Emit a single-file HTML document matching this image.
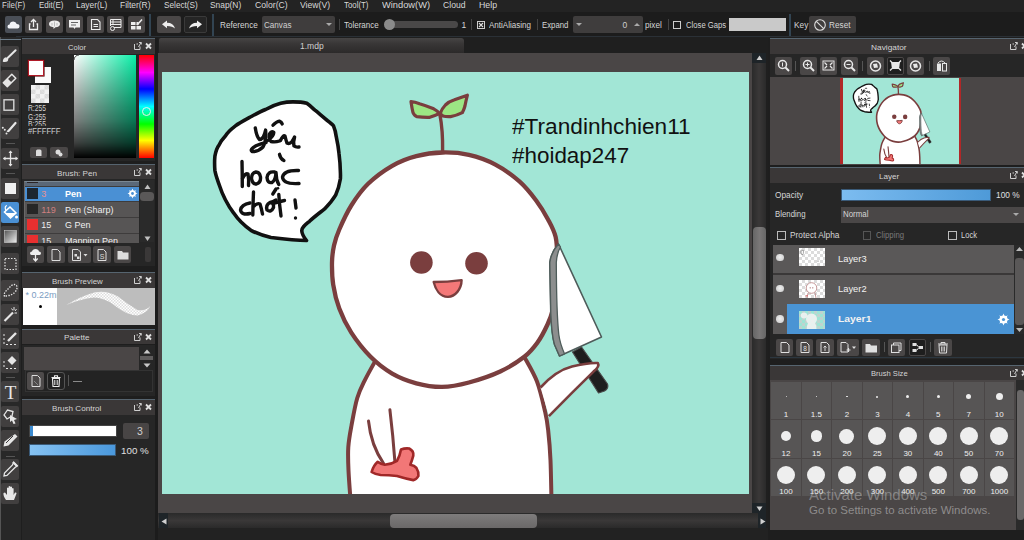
<!DOCTYPE html>
<html><head><meta charset="utf-8"><style>
*{margin:0;padding:0;box-sizing:border-box}
body{width:1024px;height:540px;overflow:hidden;background:#1f1f1f;font-family:"Liberation Sans",sans-serif;position:relative;color:#d6d6d6;font-size:9px}
.a{position:absolute}
.t{position:absolute;white-space:nowrap;line-height:1;transform-origin:0 0}
.btn{position:absolute;background:#4a4747;border-radius:2px}
.sep{position:absolute;width:1px;background:#555}
.tool{position:absolute;left:1px;width:18px;height:21px;background:#3c3a3a;border-radius:2px}
</style></head><body>

<div class="a" style="left:0;top:0;width:1024px;height:12px;background:#232323"></div>
<span class="t" style="left:1.90px;top:1.25px;font-size:9px;color:#d8d8d8;transform:scaleX(0.8885);">File(F)</span>
<span class="t" style="left:38.75px;top:1.25px;font-size:9px;color:#d8d8d8;transform:scaleX(0.8868);">Edit(E)</span>
<span class="t" style="left:76.25px;top:1.25px;font-size:9px;color:#d8d8d8;transform:scaleX(0.9324);">Layer(L)</span>
<span class="t" style="left:120.00px;top:1.25px;font-size:9px;color:#d8d8d8;transform:scaleX(0.9385);">Filter(R)</span>
<span class="t" style="left:163.60px;top:1.25px;font-size:9px;color:#d8d8d8;transform:scaleX(0.9131);">Select(S)</span>
<span class="t" style="left:209.90px;top:1.25px;font-size:9px;color:#d8d8d8;transform:scaleX(0.9309);">Snap(N)</span>
<span class="t" style="left:254.50px;top:1.25px;font-size:9px;color:#d8d8d8;transform:scaleX(0.9628);">Color(C)</span>
<span class="t" style="left:300.40px;top:1.25px;font-size:9px;color:#d8d8d8;transform:scaleX(0.9571);">View(V)</span>
<span class="t" style="left:344.00px;top:1.25px;font-size:9px;color:#d8d8d8;transform:scaleX(0.8745);">Tool(T)</span>
<span class="t" style="left:381.50px;top:1.25px;font-size:9px;color:#d8d8d8;transform:scaleX(1.0323);">Window(W)</span>
<span class="t" style="left:442.75px;top:1.25px;font-size:9px;color:#d8d8d8;transform:scaleX(0.9568);">Cloud</span>
<span class="t" style="left:479.00px;top:1.25px;font-size:9px;color:#d8d8d8;transform:scaleX(0.9722);">Help</span>
<div class="a" style="left:0;top:12px;width:1024px;height:25px;background:#1c1c1c"></div>

<div class="btn" style="left:5px;top:16px;width:17px;height:17px;background:#4a4f57"></div>
<svg class="a" style="left:5px;top:16px" width="17" height="17"><path d="M4 12.5 Q2.5 12.5 2.5 10.5 Q2.5 8.6 4.6 8.6 Q5 5.5 8.3 5.5 Q11 5.5 11.7 8 Q14.5 8 14.5 10.3 Q14.5 12.5 12.5 12.5 Z" fill="#f2f4f8"/></svg>
<div class="btn" style="left:25px;top:16px;width:17px;height:17px"></div>
<svg class="a" style="left:25px;top:16px" width="17" height="17" fill="none" stroke="#eee" stroke-width="1.3"><path d="M5.5 8 H4.5 V13.5 H12.5 V8 H11.5"/><path d="M8.5 11 V3.5 M6 6 L8.5 3.5 L11 6"/></svg>
<div class="btn" style="left:45.5px;top:16px;width:17px;height:17px"></div>
<svg class="a" style="left:45.5px;top:16px" width="17" height="17"><path d="M3 8 Q3 4.5 8.5 4.5 Q14 4.5 14 8 Q14 11 9.5 11.3 L7.5 13 L7.5 11.2 Q3 10.8 3 8Z" fill="#eee"/><path d="M8.5 5.5 V10.5 M6 7 V9.5 M11 7 V9.5" stroke="#999" stroke-width="0.6"/></svg>
<div class="btn" style="left:66px;top:16px;width:17px;height:17px"></div>
<svg class="a" style="left:66px;top:16px" width="17" height="17"><path d="M3 4 H14 V11.5 H9.5 L8.5 13 L7.5 11.5 H3Z" fill="#f0f0f0"/><path d="M5 6.5 H12 M5 9 H10" stroke="#666" stroke-width="1"/></svg>
<div class="btn" style="left:87px;top:16px;width:17px;height:17px"></div>
<svg class="a" style="left:87px;top:16px" width="17" height="17" fill="none" stroke="#eee" stroke-width="1.1"><path d="M4.5 3.5 H10.5 L13 6 V13.5 H4.5Z"/><path d="M6.5 8.5 H11 M6.5 10.5 H11"/></svg>
<div class="btn" style="left:107px;top:16px;width:17px;height:17px"></div>
<svg class="a" style="left:107px;top:16px" width="17" height="17" fill="none" stroke="#eee" stroke-width="1"><path d="M3.5 3.5 H14 V11.5 H7 M3.5 3.5 V10 M3.5 6 H14 M6 3.5 V9 M3.5 8.5 H14"/><circle cx="5.5" cy="12.5" r="2"/></svg>
<div class="btn" style="left:127.5px;top:16px;width:17px;height:17px"></div>
<svg class="a" style="left:127.5px;top:16px" width="17" height="17"><path d="M3 6 H7.5 V9 H3Z M8.5 6 H10.5 V9 H8.5Z M3 10 H7.5 V13.5 H3Z M8.5 10 H13 V13.5 H8.5Z" fill="#eee"/><path d="M9 9 L14 3.5" stroke="#eee" stroke-width="1.5"/></svg>
<div class="a" style="left:149px;top:14px;width:2px;height:22px;background:#324452"></div>
<div class="btn" style="left:157px;top:16px;width:24px;height:17px"></div>
<svg class="a" style="left:157px;top:16px" width="24" height="17"><path d="M5 8.3 L10 4.5 V6.8 Q16.5 6.8 18 12.5 Q15.5 10 10 10 V12.2Z" fill="#eee"/></svg>
<div class="btn" style="left:184px;top:16px;width:23px;height:17px;background:#252525;border:1px solid #3a3a3a"></div>
<svg class="a" style="left:184px;top:16px" width="23" height="17"><path d="M18 8.3 L13 4.5 V6.8 Q6.5 6.8 5 12.5 Q7.5 10 13 10 V12.2Z" fill="#eee"/></svg>
<div class="a" style="left:211.5px;top:14px;width:2px;height:22px;background:#324452"></div>
<span class="t" style="left:220.00px;top:21.15px;font-size:8.5px;color:#d6d6d6;transform:scaleX(0.9638);">Reference</span>
<div class="btn" style="left:262px;top:16px;width:73px;height:17px;background:#3f3d3d"></div>
<span class="t" style="left:263.50px;top:21.15px;font-size:8.5px;color:#cfcfcf;transform:scaleX(0.9539);">Canvas</span>
<svg class="a" style="left:325px;top:22px" width="8" height="5"><path d="M1 1 H7 L4 4Z" fill="#aaa"/></svg>
<div class="sep" style="left:338.5px;top:19px;height:11px;background:#444"></div>
<span class="t" style="left:344.00px;top:21.15px;font-size:8.5px;color:#d6d6d6;transform:scaleX(0.9428);">Tolerance</span>
<div class="a" style="left:386px;top:21px;width:72px;height:7px;background:#4a4848;border-radius:3.5px"></div>
<div class="a" style="left:384px;top:19px;width:11px;height:11px;background:#8a8a8a;border-radius:50%"></div>
<span class="t" style="left:461.50px;top:21.15px;font-size:8.5px;color:#d6d6d6;">1</span>
<div class="sep" style="left:471px;top:19px;height:11px;background:#444"></div>
<div class="a" style="left:477px;top:20.5px;width:8px;height:8px;border:1px solid #ccc"></div>
<svg class="a" style="left:477px;top:20.5px" width="8" height="8"><path d="M2 2 L6 6 M6 2 L2 6" stroke="#ddd" stroke-width="1.1"/></svg>
<span class="t" style="left:489.00px;top:21.15px;font-size:8.5px;color:#d6d6d6;transform:scaleX(0.9455);">AntiAliasing</span>
<div class="sep" style="left:536.5px;top:19px;height:11px;background:#444"></div>
<span class="t" style="left:541.60px;top:21.15px;font-size:8.5px;color:#d6d6d6;transform:scaleX(0.9153);">Expand</span>
<div class="btn" style="left:572.5px;top:16px;width:70px;height:17px;background:#3f3d3d"></div>
<svg class="a" style="left:575px;top:22px" width="8" height="5"><path d="M1 1 H7 L4 4Z" fill="#aaa"/></svg>
<span class="t" style="left:622.50px;top:21.15px;font-size:8.5px;color:#cfcfcf;">0</span>
<svg class="a" style="left:633px;top:22px" width="8" height="5"><path d="M1 4 H7 L4 1Z" fill="#aaa"/></svg>
<span class="t" style="left:645.00px;top:21.15px;font-size:8.5px;color:#d6d6d6;transform:scaleX(0.9609);">pixel</span>
<div class="sep" style="left:668px;top:19px;height:11px;background:#444"></div>
<div class="a" style="left:673px;top:20.5px;width:8px;height:8px;border:1px solid #ccc"></div>
<span class="t" style="left:685.50px;top:21.15px;font-size:8.5px;color:#d6d6d6;transform:scaleX(0.9050);">Close Gaps</span>
<div class="a" style="left:728.5px;top:18px;width:57px;height:13px;background:#c9c9c9"></div>
<div class="a" style="left:789px;top:14px;width:2px;height:22px;background:#324452"></div>
<span class="t" style="left:793.70px;top:21.15px;font-size:8.5px;color:#d6d6d6;transform:scaleX(0.9757);">Key</span>
<div class="btn" style="left:809px;top:16px;width:47px;height:17px;background:#3f3d3d"></div>
<svg class="a" style="left:813px;top:18px" width="14" height="14" fill="none" stroke="#ddd" stroke-width="1.1"><circle cx="7" cy="7" r="5.3"/><path d="M3.3 3.3 L10.7 10.7"/></svg>
<span class="t" style="left:828.50px;top:21.15px;font-size:8.5px;color:#d6d6d6;transform:scaleX(0.9677);">Reset</span>

<div class="a" style="left:0;top:37px;width:21px;height:503px;background:#282828;border-left:1px solid #555"></div>
<div class="a" style="left:0;top:39px;width:21px;height:1px;background:#6e7e8a"></div>
<div class="a" style="left:16px;top:36px;width:1008px;height:1px;background:#2a3036"></div>
<div class="tool" style="top:46px;background:#413f3f"></div><svg class="a" style="left:1px;top:46px" width="19" height="21"><path d="M6.3 12.3 L14.6 4.2" stroke="#e6e6e6" stroke-width="2" stroke-linecap="round"/><path d="M1.8 15.8 Q1.8 11.8 5 11.3 L7.3 13.5 Q6.8 16.8 1.8 15.8Z" fill="#e6e6e6"/></svg>
<div class="tool" style="top:70px;background:#413f3f"></div><svg class="a" style="left:1px;top:70px" width="19" height="21"><path d="M10.8 4.3 L14.8 8.3 L6.3 16.8 L2.3 12.8Z" fill="none" stroke="#e6e6e6" stroke-width="1.5" stroke-linejoin="round"/><path d="M2.3 12.8 L6.6 8.5 L10.6 12.5 L6.3 16.8Z" fill="#e6e6e6"/></svg>
<div class="tool" style="top:94px;background:#413f3f"></div><svg class="a" style="left:1px;top:94px" width="19" height="21"><rect x="3" y="5.8" width="9.8" height="10.4" fill="none" stroke="#d8d8d8" stroke-width="1.4"/></svg>
<div class="tool" style="top:118px;background:#413f3f"></div><svg class="a" style="left:1px;top:118px" width="19" height="21"><path d="M7.5 13 L14.5 5" stroke="#e6e6e6" stroke-width="2.2" stroke-linecap="round"/><circle cx="1.8" cy="9.8" r="1" fill="#e6e6e6"/><circle cx="3.8" cy="11.8" r="1" fill="#e6e6e6"/><circle cx="5.5" cy="15.5" r="1" fill="#e6e6e6"/><circle cx="6.5" cy="13.3" r="0.8" fill="#e6e6e6"/></svg>
<div class="tool" style="top:148px;background:#413f3f"></div><svg class="a" style="left:1px;top:148px" width="19" height="21"><path d="M9.5 3 V18 M2.5 10.5 H16.5" stroke="#e6e6e6" stroke-width="1.3"/><path d="M9.5 2.5 L7.5 5 H11.5Z M9.5 18.5 L7.5 16 H11.5Z M2 10.5 L4.5 8.5 V12.5Z M17 10.5 L14.5 8.5 V12.5Z" fill="#e6e6e6"/></svg>
<div class="tool" style="top:178px;background:#413f3f"></div><svg class="a" style="left:1px;top:178px" width="19" height="21"><rect x="4" y="5" width="11" height="11" fill="#f0f0f0"/></svg>
<div class="tool" style="top:202px;background:#4a90d4"></div><svg class="a" style="left:1px;top:202px" width="19" height="21"><path d="M3.5 10 L9 5 L15 11 L9.5 16Z" fill="none" stroke="#fff" stroke-width="1.6"/><path d="M4 11 L15 11 L9.5 16Z" fill="#fff"/><path d="M5 9 Q3 4 6 3.5" stroke="#fff" stroke-width="1.2" fill="none"/><circle cx="15.5" cy="15" r="1.5" fill="#fff"/></svg>
<div class="tool" style="top:225.5px;background:#413f3f"></div><svg class="a" style="left:1px;top:225.5px" width="19" height="21"><defs><linearGradient id="gr1" x1="0" y1="0" x2="1" y2="1"><stop offset="0" stop-color="#555"/><stop offset="1" stop-color="#eee"/></linearGradient></defs><rect x="3.5" y="4.5" width="12" height="12" fill="url(#gr1)" stroke="#ccc" stroke-width="0.6"/></svg>
<div class="tool" style="top:253px;background:#413f3f"></div><svg class="a" style="left:1px;top:253px" width="19" height="21"><rect x="4" y="5.5" width="11" height="11" fill="none" stroke="#e6e6e6" stroke-width="1.2" stroke-dasharray="1.5 1.5"/></svg>
<div class="tool" style="top:280px;background:#413f3f"></div><svg class="a" style="left:1px;top:280px" width="19" height="21"><path d="M3.5 16.5 Q2.5 13 5.5 10.5 Q8 8 10.5 5.5 Q13.5 3.5 15.5 5.5 Q17 8 14.5 11.5 Q11.5 15 7.5 15.5 Q5 15.8 3.5 16.5" fill="none" stroke="#e6e6e6" stroke-width="1.3" stroke-dasharray="1.4 1.3"/></svg>
<div class="tool" style="top:304px;background:#413f3f"></div><svg class="a" style="left:1px;top:304px" width="19" height="21"><path d="M3.5 17 L12 8.5" stroke="#e6e6e6" stroke-width="2.2"/><path d="M13 3 V6 M15.5 5 L14 7 M16 9 H13.5 M10.5 4.5 L12 6.5" stroke="#e6e6e6" stroke-width="1"/></svg>
<div class="tool" style="top:328px;background:#413f3f"></div><svg class="a" style="left:1px;top:328px" width="19" height="21"><path d="M7 13 L15 5" stroke="#e6e6e6" stroke-width="2.4"/><path d="M3 6 V8 M3 10 V12 M3 14 V16 M5 16.5 H7 M9 16.5 H11 M13 16.5 H15" stroke="#e6e6e6" stroke-width="1"/></svg>
<div class="tool" style="top:352px;background:#413f3f"></div><svg class="a" style="left:1px;top:352px" width="19" height="21"><path d="M11 4 L15.5 8.5 L11 13 L6.5 8.5Z" fill="#e6e6e6"/><path d="M3 9 V11 M3 13 V15 M5 16.5 H7 M9 16.5 H11 M13 16.5 H15" stroke="#e6e6e6" stroke-width="1"/></svg>
<div class="tool" style="top:381px;background:#413f3f"></div><svg class="a" style="left:1px;top:381px" width="19" height="21"><text x="9.5" y="18" font-family="Liberation Serif" font-size="19" fill="#e6e6e6" text-anchor="middle">T</text></svg>
<div class="tool" style="top:406px;background:#413f3f"></div><svg class="a" style="left:1px;top:406px" width="19" height="21"><path d="M3 9 L6.5 4 L12 5.5 L11 10 L6 13Z" fill="none" stroke="#e6e6e6" stroke-width="1.3"/><path d="M9 9 L16 13 L13 14 L14.5 17.5 L12.5 18 L11 14.5 L9 16Z" fill="#e6e6e6"/></svg>
<div class="tool" style="top:430px;background:#413f3f"></div><svg class="a" style="left:1px;top:430px" width="19" height="21"><path d="M14 4 L16.5 6.5 L7.5 15.5 L2.5 16.5 L3.5 11.5Z" fill="#e6e6e6"/><path d="M5 13 L12 6" stroke="#3c3a3a" stroke-width="1"/></svg>
<div class="tool" style="top:458.5px;background:#413f3f"></div><svg class="a" style="left:1px;top:458.5px" width="19" height="21"><path d="M12.5 3.5 L16 7 L14 8.5 L6 16.5 L3 17 L3.5 14 L11.5 6Z" fill="none" stroke="#e6e6e6" stroke-width="1.3"/><path d="M12 3 L16.5 7.5" stroke="#e6e6e6" stroke-width="2.2"/></svg>
<div class="tool" style="top:483px;background:#413f3f"></div><svg class="a" style="left:1px;top:483px" width="19" height="21"><path d="M5 17 Q2 13 2.5 10 L4 9.5 L6 12 V5 Q6.8 4 7.6 5 V10 V3.5 Q8.5 2.5 9.4 3.5 V10 V4 Q10.2 3 11 4 V10.5 V5.5 Q11.8 4.5 12.6 5.5 V12 L14 9.5 Q15.5 9 15.5 10.5 L13 17Z" fill="#e6e6e6"/></svg>
<div class="a" style="left:6px;top:143px;width:9px;height:1px;background:#555"></div>
<div class="a" style="left:6px;top:173px;width:9px;height:1px;background:#555"></div>
<div class="a" style="left:6px;top:377px;width:9px;height:1px;background:#555"></div>
<div class="a" style="left:6px;top:455.5px;width:9px;height:1px;background:#555"></div>
<div class="a" style="left:21px;top:37px;width:137px;height:503px;background:#1e1e1e"></div>
<div class="a" style="left:22px;top:38px;width:135px;height:15.6px;background:#3a3737"></div><div class="a" style="left:22px;top:38px;width:135px;height:1px;background:#56646f"></div><span class="t" style="left:68.00px;top:43.50px;font-size:8px;color:#d4d4d4;transform:scaleX(0.9412);">Color</span><svg class="a" style="left:133px;top:41px" width="22" height="10"><path d="M1.5 3 V8.5 H7 V5.5 M3.5 3 H5 M5.5 6 L8 1.5 M6 1.5 H8.3 V3.5" fill="none" stroke="#cfcfcf" stroke-width="1"/><path d="M13 2.5 L18 7.5 M18 2.5 L13 7.5" stroke="#e0e0e0" stroke-width="1.8"/></svg><div class="a" style="left:22px;top:54px;width:135px;height:107px;background:#262626"></div><div class="a" style="left:35px;top:67px;width:16px;height:16px;background:#fafafa"></div><div class="a" style="left:28.4px;top:60px;width:15.6px;height:15.6px;background:#fff;border:1.8px solid #b01a28;box-shadow:0 0 0 0.6px #5a1010"></div><div class="a" style="left:31px;top:85px;width:18px;height:18px;background:#f2f2f2;background-image:linear-gradient(45deg,#dcdcdc 25%,transparent 25%,transparent 75%,#dcdcdc 75%),linear-gradient(45deg,#dcdcdc 25%,transparent 25%,transparent 75%,#dcdcdc 75%);background-size:9px 9px;background-position:0 0,4.5px 4.5px"></div><span class="t" style="left:28.40px;top:105.20px;font-size:8.2px;color:#d0d0d0;transform:scaleX(0.8234);">R:255</span><span class="t" style="left:28.40px;top:113.60px;font-size:8.2px;color:#d0d0d0;transform:scaleX(0.8067);">G:255</span><div class="a" style="left:0;top:121px;width:80px;height:5px;overflow:hidden"><span class="t" style="left:28.40px;top:-0.00px;font-size:8.2px;color:#d0d0d0;transform:scaleX(0.8409);">B:255</span></div><span class="t" style="left:28.40px;top:128.00px;font-size:8.2px;color:#d0d0d0;transform:scaleX(0.9403);">#FFFFFF</span><div class="btn" style="left:30px;top:146.5px;width:16.5px;height:11px"></div><svg class="a" style="left:30px;top:146.5px" width="17" height="11"><path d="M6 9 V4 Q6 2.5 7.5 2.5 H10 Q11.5 2.5 11.5 4 V9Z" fill="#ddd"/></svg><div class="btn" style="left:50px;top:146.5px;width:17.5px;height:11px"></div><svg class="a" style="left:50px;top:146.5px" width="18" height="11"><circle cx="8" cy="5" r="2.5" fill="#ddd"/><circle cx="10.5" cy="7.5" r="2" fill="#ddd"/></svg><div class="a" style="left:73.5px;top:55px;width:62.5px;height:103px;background:linear-gradient(to bottom,rgba(0,0,0,0) 0%,rgba(0,0,0,.21) 25%,rgba(0,0,0,.5) 63%,rgba(0,0,0,.75) 85%,#000 100%),linear-gradient(to right,#fff,#0af0a8)"></div><svg class="a" style="left:73px;top:54px" width="8" height="8"><path d="M1 6 A5 5 0 0 1 6 1" fill="none" stroke="#444" stroke-width="1"/></svg><div class="a" style="left:138.5px;top:55px;width:15.5px;height:103px;background:linear-gradient(to bottom,#f00 0%,#f0f 17%,#00f 33%,#0ff 50%,#0f0 67%,#ff0 83%,#f00 100%)"></div><div class="a" style="left:141.5px;top:106.5px;width:9px;height:9px;border:1.5px solid #eee;border-radius:50%"></div><div class="a" style="left:22px;top:164px;width:135px;height:15.6px;background:#3a3737"></div><div class="a" style="left:22px;top:164px;width:135px;height:1px;background:#56646f"></div><span class="t" style="left:57.00px;top:169.50px;font-size:8px;color:#d4d4d4;transform:scaleX(1.0107);">Brush: Pen</span><svg class="a" style="left:133px;top:167px" width="22" height="10"><path d="M1.5 3 V8.5 H7 V5.5 M3.5 3 H5 M5.5 6 L8 1.5 M6 1.5 H8.3 V3.5" fill="none" stroke="#cfcfcf" stroke-width="1"/><path d="M13 2.5 L18 7.5 M18 2.5 L13 7.5" stroke="#e0e0e0" stroke-width="1.8"/></svg><div class="a" style="left:22px;top:179px;width:135px;height:87px;background:#262626"></div><div class="a" style="left:24px;top:181px;width:114.5px;height:61.5px;background:#4a4747;overflow:hidden;border-left:1px solid #6a6868;border-top:1px solid #7a8894"><div class="a" style="left:0;top:-11.7px;width:114.5px;height:15.7px;background:#5a6878"></div><div class="a" style="left:2.2px;top:-9.899999999999999px;width:10.5px;height:10.9px;background:#2a2426"></div><span class="t" style="left:16.30px;top:-7.70px;font-size:9px;color:#eeeeee;"></span><span class="t" style="left:40.00px;top:-7.70px;font-size:9px;color:#f0f0f0;"></span><div class="a" style="left:0;top:4px;width:114.5px;height:15.7px;background:#4a90d4"></div><div class="a" style="left:2.2px;top:5.8px;width:10.5px;height:10.9px;background:#1c2630"></div><span class="t" style="left:16.30px;top:8.00px;font-size:9px;color:#e89090;">3</span><span class="t" style="left:40.00px;top:8.00px;font-size:9px;color:#ffffff;font-weight:bold;">Pen</span><svg class="a" style="left:102px;top:6.3px" width="11" height="11"><g fill="#fff"><circle cx="5.5" cy="5.5" r="3.3"/><path d="M5.5 0.5 L6.5 3 L4.5 3Z M5.5 10.5 L6.5 8 L4.5 8Z M0.5 5.5 L3 4.5 L3 6.5Z M10.5 5.5 L8 4.5 L8 6.5Z M2 2 L4.2 3.2 L3.2 4.2Z M9 9 L6.8 7.8 L7.8 6.8Z M9 2 L7.8 4.2 L6.8 3.2Z M2 9 L3.2 6.8 L4.2 7.8Z"/></g><circle cx="5.5" cy="5.5" r="1.4" fill="#4a90d4"/></svg><div class="a" style="left:0;top:19.7px;width:114.5px;height:15.7px;background:#575555"></div><div class="a" style="left:2.2px;top:21.5px;width:10.5px;height:10.9px;background:#262626"></div><span class="t" style="left:16.30px;top:23.70px;font-size:9px;color:#d08080;">119</span><span class="t" style="left:40.00px;top:23.70px;font-size:9px;color:#f0f0f0;">Pen (Sharp)</span><div class="a" style="left:0;top:35.3px;width:114.5px;height:15.7px;background:#575555"></div><div class="a" style="left:2.2px;top:37.099999999999994px;width:10.5px;height:10.9px;background:#e83030"></div><span class="t" style="left:16.30px;top:39.30px;font-size:9px;color:#eeeeee;">15</span><span class="t" style="left:40.00px;top:39.30px;font-size:9px;color:#f0f0f0;">G Pen</span><div class="a" style="left:0;top:51px;width:114.5px;height:15.7px;background:#575555"></div><div class="a" style="left:2.2px;top:52.8px;width:10.5px;height:10.9px;background:#e83030"></div><span class="t" style="left:16.30px;top:55.00px;font-size:9px;color:#eeeeee;">15</span><span class="t" style="left:40.00px;top:55.00px;font-size:9px;color:#f0f0f0;">Mapping Pen</span><div class="a" style="left:0;top:3.5px;width:114.5px;height:1px;background:#3e3c3c"></div><div class="a" style="left:0;top:19.2px;width:114.5px;height:1px;background:#3e3c3c"></div><div class="a" style="left:0;top:34.8px;width:114.5px;height:1px;background:#3e3c3c"></div><div class="a" style="left:0;top:50.5px;width:114.5px;height:1px;background:#3e3c3c"></div></div><div class="a" style="left:140px;top:180px;width:13.5px;height:62px;background:#2a2a2a"></div><svg class="a" style="left:143.5px;top:184px" width="7" height="6"><path d="M0.5 5 H6.5 L3.5 0.5Z" fill="#c0c0c0"/></svg><div class="a" style="left:140px;top:192px;width:13.5px;height:8.5px;background:#5a5858;border-radius:3.5px"></div><svg class="a" style="left:143.5px;top:236px" width="7" height="6"><path d="M0.5 0.5 H6.5 L3.5 5Z" fill="#c0c0c0"/></svg><div class="btn" style="left:27px;top:245.5px;width:17px;height:17.5px"></div><div class="btn" style="left:47px;top:245.5px;width:18px;height:17.5px"></div><div class="btn" style="left:68px;top:245.5px;width:22.5px;height:17.5px"></div><div class="btn" style="left:93px;top:245.5px;width:18px;height:17.5px"></div><div class="btn" style="left:113.5px;top:245.5px;width:17.5px;height:17.5px"></div><svg class="a" style="left:27px;top:245.5px" width="17" height="18"><path d="M4.5 9 Q3 9 3 7.3 Q3 5.5 5 5.5 Q5.5 3 8.5 3 Q11.5 3 12 5.5 Q14 5.5 14 7.3 Q14 9 12.5 9Z" fill="#eee"/><path d="M8.5 8 V15 M6.3 12.5 L8.5 15 L10.7 12.5" stroke="#eee" stroke-width="1.3" fill="none"/></svg><svg class="a" style="left:47px;top:245.5px" width="18" height="18" fill="none" stroke="#ddd" stroke-width="1"><path d="M5 3.5 H10.5 L13 6 V14.5 H5Z"/></svg><svg class="a" style="left:68px;top:245.5px" width="23" height="18"><path d="M4.5 3.5 H10 L12.5 6 V14.5 H4.5Z" fill="none" stroke="#ddd" stroke-width="1"/><rect x="6.5" y="8" width="2.5" height="2.5" fill="#ddd"/><rect x="9" y="10.5" width="2.5" height="2.5" fill="#ddd"/><path d="M15.5 8 H19.5 L17.5 10.5Z" fill="#ddd"/></svg><svg class="a" style="left:93px;top:245.5px" width="18" height="18"><path d="M5 3.5 H10.5 L13 6 V14.5 H5Z" fill="none" stroke="#ddd" stroke-width="1"/><text x="9" y="12.5" font-size="7" fill="#ddd" text-anchor="middle" font-family="Liberation Sans">S</text></svg><svg class="a" style="left:113.5px;top:245.5px" width="18" height="18"><path d="M3.5 5 H8 L9 6.5 H14.5 V13.5 H3.5Z" fill="#ddd"/></svg><div class="a" style="left:145px;top:247px;width:6px;height:15px;background:#3a3838;border-radius:2px"></div><div class="a" style="left:22px;top:272px;width:135px;height:15.6px;background:#3a3737"></div><div class="a" style="left:22px;top:272px;width:135px;height:1px;background:#56646f"></div><span class="t" style="left:51.62px;top:277.50px;font-size:8px;color:#d4d4d4;transform:scaleX(0.9839);">Brush Preview</span><svg class="a" style="left:133px;top:275px" width="22" height="10"><path d="M1.5 3 V8.5 H7 V5.5 M3.5 3 H5 M5.5 6 L8 1.5 M6 1.5 H8.3 V3.5" fill="none" stroke="#cfcfcf" stroke-width="1"/><path d="M13 2.5 L18 7.5 M18 2.5 L13 7.5" stroke="#e0e0e0" stroke-width="1.8"/></svg><div class="a" style="left:22.5px;top:288px;width:132.5px;height:37px;background:#bdbdbd"></div><div class="a" style="left:22.5px;top:288px;width:34.5px;height:37px;background:#fff"></div><div class="a" style="left:22.5px;top:288px;width:34.5px;height:14px;overflow:hidden"><span class="t" style="left:3.00px;top:3.00px;font-size:9px;color:#7a9cc2;">* 0.22mm</span></div><div class="a" style="left:38.5px;top:304.5px;width:3px;height:3px;background:#000;border-radius:50%"></div><svg class="a" style="left:57px;top:288px" width="98" height="37"><defs><pattern id="chk" width="3" height="3" patternUnits="userSpaceOnUse"><rect width="3" height="3" fill="#fff"/><rect width="1.5" height="1.5" fill="#dedede"/><rect x="1.5" y="1.5" width="1.5" height="1.5" fill="#dedede"/></pattern></defs><path d="M9.25 17 Q23 8.5 38 4.2 Q50 2 61 8.5 Q71 16.5 80.5 22 Q88 23.5 93.5 18 Q89 26 80.5 27.5 Q69 27 57 17 Q47 9.5 37 9.5 Q23 11 9.25 17Z" fill="url(#chk)"/></svg><div class="a" style="left:22px;top:328.5px;width:135px;height:15.6px;background:#3a3737"></div><div class="a" style="left:22px;top:328.5px;width:135px;height:1px;background:#56646f"></div><span class="t" style="left:64.25px;top:334.00px;font-size:8px;color:#d4d4d4;transform:scaleX(1.0238);">Palette</span><svg class="a" style="left:133px;top:331.5px" width="22" height="10"><path d="M1.5 3 V8.5 H7 V5.5 M3.5 3 H5 M5.5 6 L8 1.5 M6 1.5 H8.3 V3.5" fill="none" stroke="#cfcfcf" stroke-width="1"/><path d="M13 2.5 L18 7.5 M18 2.5 L13 7.5" stroke="#e0e0e0" stroke-width="1.8"/></svg><div class="a" style="left:22px;top:344.5px;width:135px;height:51px;background:#262626"></div><div class="a" style="left:24px;top:346.5px;width:114.7px;height:23px;background:#4a4646"></div><svg class="a" style="left:143px;top:348.5px" width="8" height="5"><path d="M0.5 4.5 H7.5 L4 0.5Z" fill="#c8c8c8"/></svg><div class="a" style="left:139.7px;top:356px;width:13.7px;height:3.8px;background:#5e5c5c"></div><svg class="a" style="left:143px;top:362.5px" width="8" height="5"><path d="M0.5 0.5 H7.5 L4 4.5Z" fill="#c8c8c8"/></svg><div class="a" style="left:24.8px;top:369.8px;width:128.6px;height:22.2px;background:#232323;border:1px solid #333"></div><div class="btn" style="left:26.8px;top:372px;width:17px;height:18px;background:#4e4b4b"></div><svg class="a" style="left:26.8px;top:372px" width="17" height="18" fill="none" stroke="#ddd" stroke-width="1"><path d="M5 3.5 H10.5 L13 6 V14.5 H5Z"/><path d="M7 9 L11 13" stroke="#888"/></svg><div class="btn" style="left:47.4px;top:372px;width:17.5px;height:18px;background:#222;border:1px solid #555;border-radius:3px"></div><svg class="a" style="left:47.4px;top:372px" width="18" height="18"><path d="M4.5 5.5 H13.5 M7.5 5 V3.8 H10.5 V5" stroke="#eee" stroke-width="1.1" fill="none"/><path d="M5.5 6.5 H12.5 L12 14.5 H6Z" fill="none" stroke="#eee" stroke-width="1.1"/><path d="M7.8 8 V13 M10.2 8 V13" stroke="#eee" stroke-width="1"/></svg><div class="a" style="left:68px;top:375px;width:1px;height:11px;background:#555"></div><div class="a" style="left:72.7px;top:381px;width:9.5px;height:1.2px;background:#8a8a8a"></div><div class="a" style="left:22px;top:399px;width:135px;height:15.6px;background:#3a3737"></div><div class="a" style="left:22px;top:399px;width:135px;height:1px;background:#56646f"></div><span class="t" style="left:52.30px;top:404.50px;font-size:8px;color:#d4d4d4;transform:scaleX(1.0098);">Brush Control</span><svg class="a" style="left:133px;top:402px" width="22" height="10"><path d="M1.5 3 V8.5 H7 V5.5 M3.5 3 H5 M5.5 6 L8 1.5 M6 1.5 H8.3 V3.5" fill="none" stroke="#cfcfcf" stroke-width="1"/><path d="M13 2.5 L18 7.5 M18 2.5 L13 7.5" stroke="#e0e0e0" stroke-width="1.8"/></svg><div class="a" style="left:22px;top:415px;width:135px;height:125px;background:#262626"></div><div class="a" style="left:29px;top:424.5px;width:88px;height:12px;background:#fff;border:1px solid #444"></div><div class="a" style="left:30px;top:425.5px;width:3px;height:10px;background:#3a8ad0"></div><div class="btn" style="left:122.5px;top:422.5px;width:26px;height:16px;background:#484545"></div><span class="t" style="left:137.00px;top:425.75px;font-size:10.5px;color:#d0d0d0;">3</span><div class="a" style="left:29px;top:444px;width:87px;height:12px;background:linear-gradient(to right,#86c2f2,#4a98dc);border:1px solid #3a5a78"></div><span class="t" style="left:121.00px;top:445.75px;font-size:9.5px;color:#e0e0e0;transform:scaleX(1.0320);">100 %</span><div class="a" style="left:155px;top:38px;width:3px;height:502px;background:#1c1c1c"></div>
<div class="a" style="left:158px;top:37px;width:610px;height:503px;background:#1f1f1f"></div>
<div class="a" style="left:158.5px;top:37.5px;width:305px;height:15.5px;background:linear-gradient(#474545,#383636 40%,#2c2a2a);border-radius:2px 3px 0 0"></div>
<span class="t" style="left:300.00px;top:41.55px;font-size:8.5px;color:#d0d0d0;">1.mdp</span>
<div class="a" style="left:158px;top:53px;width:594px;height:460px;background:#4a4646"></div>
<div class="a" style="left:752px;top:53px;width:14px;height:460px;background:linear-gradient(to right,#2a2a2a,#3a3838,#2a2a2a)"></div>
<div class="a" style="left:752px;top:53px;width:14px;height:10px;background:#1e2428"></div>
<svg class="a" style="left:756px;top:55px" width="7" height="6"><path d="M0.5 5 H6.5 L3.5 0.5Z" fill="#d0d0d0"/></svg>
<div class="a" style="left:752.5px;top:226.5px;width:13px;height:112px;background:linear-gradient(to right,#666,#7a7878,#666);border-radius:4px"></div>
<div class="a" style="left:752px;top:503px;width:14px;height:10px;background:#1e2428"></div>
<svg class="a" style="left:756px;top:505.5px" width="7" height="6"><path d="M0.5 0.5 H6.5 L3.5 5Z" fill="#d0d0d0"/></svg>
<div class="a" style="left:158px;top:512.5px;width:608px;height:15.5px;background:linear-gradient(#2a2a2a,#3a3838 50%,#2a2a2a)"></div>
<div class="a" style="left:159px;top:513px;width:9px;height:15px;background:#1e2428"></div>
<svg class="a" style="left:160.5px;top:517.5px" width="6" height="7"><path d="M5.5 0.5 V6.5 L0.5 3.5Z" fill="#d0d0d0"/></svg>
<div class="a" style="left:389.5px;top:514px;width:147.5px;height:13.5px;background:linear-gradient(#7e7c7c,#6a6868);border-radius:4px"></div>
<div class="a" style="left:758px;top:513px;width:8px;height:15px;background:#1e2428"></div>
<svg class="a" style="left:760px;top:517.5px" width="6" height="7"><path d="M0.5 0.5 V6.5 L5.5 3.5Z" fill="#d0d0d0"/></svg>
<div class="a" style="left:158px;top:528px;width:610px;height:12px;background:#222"></div>
<svg width="0" height="0" style="position:absolute"><symbol id="art" viewBox="162 71.5 587 422.5" preserveAspectRatio="none">
<rect x="162" y="71.5" width="587" height="422.5" fill="#a2e6d6"/>
<path d="M214.9 155.6 C216 150 217 147 219 144.6 C221 140 223 138 225.8 135 C228 131 232 128 235.4 125.4 C240 122 245 119.5 249.2 117.2 C255 114 260 111 265.6 109 C271 106 276 104 280.7 102.8 C285 101.8 289 101.4 293 101.4 C298 101.4 303 101.8 306.8 102.8 C310 105 312.5 107.5 315 109.7 C319 113 323 116.5 327.3 120 C330 122 332 123.5 333.5 125.4 C335 129 335.8 132.5 336.3 136.4 C337.5 142 338.5 147.5 339 152.9 C339.8 159 340.3 165 340.4 172 C340.5 174 340.5 176 340.4 178.2 C339.5 184 338 189.5 335.6 194.7 C332.5 200 328.5 204.5 324.6 208.4 C319.5 212.5 314 216.5 309.5 220.8 C305 224.5 301.5 227 301.8 230.5 C302 234 304.5 237.5 306.5 240 C295 240 283 238.5 271 237 C262 235 256 232.5 250.9 229.8 C244 225 238 219 233.7 212.6 C228 205 222 193 219 183.7 C217 178 215.5 174 214.9 170 C214.5 165 214.5 160 214.9 155.6Z" fill="#fff" stroke="#111" style="stroke-width:calc(3.6px * var(--k,1))" stroke-linejoin="round"/>
<g fill="none" stroke="#111" style="stroke-width:calc(3.4px * var(--kt,1))" stroke-linecap="round" stroke-linejoin="round">
<path d="M255.3 127.5 Q256.5 136 259.5 139 Q263.5 139 265.6 129.6 Q266.5 140 263 146.5 Q258 151.5 252 151 Q249.5 149 256 145.3 Q261 143 266 142"/>
<path d="M267.5 140 Q273.5 136 273.8 132 Q271 130 269.3 134 Q268.5 139 271 141 Q275 142 279.5 140.5"/>
<path d="M273 124.7 Q276.5 121 279.3 120.6 Q281.5 121.5 282.2 123.4"/>
<path d="M280.5 140 Q283 134.5 285 135.5 Q286 140 287 142.5 Q289.5 144 292 141 Q294 138 294.6 136.5 Q293 142 294 145.5 Q296 147 299 146.5"/>
<path d="M279.5 153.8 Q280.5 158.5 283.9 160"/>
<path d="M242 161 Q242.3 174 242.3 186"/>
<path d="M242.5 178 Q245.5 172 248 173.5 Q249 179 248.5 185"/>
<path d="M256 171.5 Q251.5 172.5 251.5 178 Q252.5 184 256.5 183.5 Q261 182 260.5 176.5 Q259.5 171.5 256 171.5Z"/>
<path d="M274.5 171.5 Q268 170.5 267 177 Q267.5 183 272 182 Q275.5 180 276 172 Q276 179 278.8 184"/>
<path d="M298.5 170 Q284 169.5 282.5 176.5 Q283 184 299 183"/>
<path d="M250 202.5 Q241.5 204 240.5 209.5 Q241.5 215 250 213"/>
<path d="M253.5 191.5 Q253 203 252.8 214.5 M253 206.5 Q257 202 260 203.5 Q261.5 208 262.5 213.5"/>
<path d="M270 202 Q265.5 204.5 267 209.5 Q271 212.5 273.5 207 Q274 202 270 202 Q273 201.5 276 199.5"/>
<path d="M272.8 193.5 L276 188.5"/>
<path d="M278.8 194 Q279.5 205 281 215.5 M273.5 203 Q279 201 284.5 200"/>
<path d="M295 199.5 L296 207.5"/>
</g>
<circle cx="278" cy="187.8" r="1.3" fill="#111"/>
<circle cx="295.5" cy="217.5" r="1.7" fill="#111"/>
<path d="M439.8 113.5 Q443 130 442.6 151" fill="none" stroke="#7a3e3e" style="stroke-width:calc(3.4px * var(--k,1))"/>
<path d="M411 101.2 Q412 108 413 112.2 Q414.5 115.5 416.9 116.1 Q423 117 429.8 116.8 Q435 115 439.5 113 Q437 110 433.7 108.3 Q426 105 419.5 103.2 Q415 101.5 411 101.2Z" fill="#9ce684" stroke="#7a3e3e" style="stroke-width:calc(3.2px * var(--k,1))" stroke-linejoin="round"/>
<path d="M440.2 112.9 Q442 108 445.4 104.5 Q449 101 454.5 99.3 Q461 97 467.4 94.7 Q466 100 464.9 105.8 Q464 109 462.3 112.2 Q457 115 450.6 116.1 Q446 116.3 442.8 115.5Z" fill="#9ce684" stroke="#7a3e3e" style="stroke-width:calc(3.2px * var(--k,1))" stroke-linejoin="round"/>
<path d="M375.0 361.0 C373.2 364.2 367.5 374.3 364.5 380.4 C361.5 386.5 359.4 390.4 357.2 397.8 C355.0 405.2 353.0 416.9 351.5 425.0 C350.0 433.1 348.8 439.2 348.3 446.7 C347.8 454.2 348.1 461.1 348.5 470.0 C348.9 478.9 350.2 495.0 350.6 500.0 L551.5 500.0 C551.3 493.3 551.0 471.7 550.5 460.0 C550.0 448.3 549.1 438.1 548.2 430.0 C547.3 421.9 547.1 419.8 545.2 411.6 C543.3 403.4 540.5 390.2 537.0 381.0 C533.5 371.8 526.4 360.4 524.3 356.3" fill="#fff" stroke="#7a3e3e" style="stroke-width:calc(4px * var(--k,1))"/>
<path d="M442.8 152.0 C451.6 151.8 460.1 152.4 468.9 154.4 C477.7 156.4 487.0 159.7 495.4 164.1 C503.8 168.5 512.6 174.9 519.4 180.9 C526.2 186.9 531.5 193.8 536.3 200.2 C541.1 206.6 545.1 213.4 548.3 219.4 C551.5 225.4 554.1 229.9 555.6 236.3 C557.1 242.7 557.1 249.9 557.2 258.0 C557.4 266.1 557.2 276.6 556.5 285.0 C555.8 293.4 554.6 301.6 553.1 308.1 C551.6 314.6 550.1 318.4 547.5 324.0 C544.9 329.6 541.4 336.6 537.5 342.0 C533.6 347.4 530.5 351.5 524.3 356.3 C518.1 361.1 509.4 366.7 500.2 371.0 C491.0 375.3 478.6 379.4 468.9 382.0 C459.2 384.6 450.8 386.3 442.0 386.4 C433.2 386.5 424.6 385.0 416.3 382.8 C408.0 380.6 399.8 377.5 392.2 373.1 C384.6 368.7 377.4 363.1 370.6 356.3 C363.8 349.5 356.5 340.2 351.3 332.2 C346.1 324.2 342.3 316.1 339.3 308.1 C336.3 300.1 334.4 291.8 333.2 284.1 C332.0 276.4 331.9 268.5 332.0 262.0 C332.1 255.5 332.8 250.5 334.0 245.0 C335.2 239.5 336.4 235.7 339.3 229.0 C342.2 222.3 346.5 212.6 351.3 205.0 C356.1 197.4 361.3 189.9 368.1 183.3 C374.9 176.7 384.2 169.9 392.2 165.3 C400.2 160.7 407.9 157.8 416.3 155.6 C424.7 153.4 434.0 152.2 442.8 152.0Z" fill="#fff" stroke="#7a3e3e" style="stroke-width:calc(4.3px * var(--k,1))"/>
<circle cx="421.4" cy="262" r="11.3" fill="#7a3e3e"/>
<circle cx="476.5" cy="262.7" r="11.3" fill="#7a3e3e"/>
<path d="M433.7 281.5 Q447 281.5 461.6 279.6 C461.5 289 455 296 448 296.4 C440 296.5 435.5 289 433.7 281.5Z" fill="#f47878" stroke="#7a3e3e" style="stroke-width:calc(2.4px * var(--k,1))" stroke-linejoin="round"/>
<path d="M368.5 420.5 Q371 445 383.8 463.3 M389.9 409.3 Q393 435 395 462.3" fill="none" stroke="#7a3e3e" style="stroke-width:calc(3px * var(--k,1))" stroke-linecap="round"/>
<path d="M371.6 471.5 Q373.5 465 377.7 461.3 Q381 463.5 384.8 464.3 Q392 463.5 397 460.3 Q400 455 401 449 Q405 447.5 409.2 448 Q414 450.5 413.3 455.2 Q412 460 410.3 464.3 Q414.5 465 416.4 467.4 Q419 471.5 418.4 475.5 Q416.5 479 413.3 479.6 Q405 478 397 475.5 Q389 474.5 380.7 474.5 Q375 473.8 371.6 471.5Z" fill="#f27777" stroke="#a02828" style="stroke-width:calc(2.6px * var(--k,1))" stroke-linejoin="round"/>
<path d="M558.5 243.5 Q551 252 549.8 262 L550.8 313 Q551.8 335 554.5 344 L559.5 355.5 L601.5 336.5 Z" fill="#fff" stroke="#4e5c5a" style="stroke-width:calc(1.6px * var(--k,1))" stroke-linejoin="round"/>
<path d="M558.5 243.5 Q551 252 549.8 262 L550.8 313 Q551.8 335 554.5 344 L559.5 355.5 L564.5 353.3 Q560 343 558.8 334 Q556.5 313 556.3 262 Q557 252 560.5 246.5Z" fill="#8c8e8e" stroke="#4e5c5a" style="stroke-width:calc(1.3px * var(--k,1))" stroke-linejoin="round"/>
<path d="M572.5 351.5 L581.5 346.5 L607.5 383.5 Q609 388 604.5 390.5 L598.5 392.5 Z" fill="#1e1e1e" stroke="#4a4a4a" style="stroke-width:calc(1.2px * var(--k,1))" stroke-linejoin="round"/>
<path d="M540.5 387 Q556 370 572 366 Q588 362 597.8 362.5 Q600 366 593.5 371.1 Q572 392 548.9 415.6" fill="#fff" stroke="#7a3e3e" style="stroke-width:calc(2.6px * var(--k,1))" stroke-linejoin="round"/>
</symbol></svg>
<svg class="a" style="left:162px;top:71.5px" width="587" height="422.5"><use href="#art" width="587" height="422.5"/></svg>
<span class="t" style="left:511.70px;top:116.55px;font-size:21.5px;color:#111111;transform:scaleX(1.0528);">#Trandinhchien11</span>
<span class="t" style="left:511.70px;top:145.85px;font-size:21.5px;color:#111111;transform:scaleX(1.0426);">#hoidap247</span>
<div class="a" style="left:768px;top:37px;width:256px;height:503px;background:#1e1e1e"></div>
<div class="a" style="left:770px;top:38px;width:264px;height:15.6px;background:#3a3737"></div><div class="a" style="left:770px;top:38px;width:264px;height:1px;background:#56646f"></div><span class="t" style="left:871.20px;top:43.50px;font-size:8px;color:#d4d4d4;transform:scaleX(1.0394);">Navigator</span><svg class="a" style="left:1009px;top:41px" width="22" height="10"><path d="M1.5 3 V8.5 H7 V5.5 M3.5 3 H5 M5.5 6 L8 1.5 M6 1.5 H8.3 V3.5" fill="none" stroke="#cfcfcf" stroke-width="1"/><path d="M13 2.5 L18 7.5 M18 2.5 L13 7.5" stroke="#e0e0e0" stroke-width="1.8"/></svg><div class="a" style="left:770px;top:53.5px;width:254px;height:23px;background:#262626"></div><div class="btn" style="left:774.5px;top:57px;width:17px;height:17.5px;background:#4a4747;"></div><div class="btn" style="left:799.5px;top:57px;width:17px;height:17.5px;background:#4a4747;"></div><div class="btn" style="left:820px;top:57px;width:17px;height:17.5px;background:#4a4747;"></div><div class="btn" style="left:840.5px;top:57px;width:17px;height:17.5px;background:#4a4747;"></div><div class="btn" style="left:866.5px;top:57px;width:17px;height:17.5px;background:#4a4747;"></div><div class="btn" style="left:887px;top:57px;width:17px;height:17.5px;background:#1e1e1e;border:1px solid #4a4747;"></div><div class="btn" style="left:907px;top:57px;width:17px;height:17.5px;background:#4a4747;"></div><div class="btn" style="left:933px;top:57px;width:17px;height:17.5px;background:#4a4747;"></div><div class="a" style="left:795px;top:61px;width:1px;height:10px;background:#555"></div><div class="a" style="left:862px;top:61px;width:1px;height:10px;background:#555"></div><div class="a" style="left:928.5px;top:61px;width:1px;height:10px;background:#555"></div><svg class="a" style="left:774.5px;top:57px" width="17" height="18"><circle cx="7.5" cy="7.5" r="4" fill="none" stroke="#e8e8e8" stroke-width="1.5"/><path d="M10.5 10.5 L14 14" stroke="#e8e8e8" stroke-width="2"/><path d="M7.5 5.5 V9.5" stroke="#e8e8e8" stroke-width="1"/></svg><svg class="a" style="left:799.5px;top:57px" width="17" height="18"><circle cx="7.5" cy="7.5" r="4" fill="none" stroke="#e8e8e8" stroke-width="1.5"/><path d="M10.5 10.5 L14 14" stroke="#e8e8e8" stroke-width="2"/><path d="M5.5 7.5 H9.5 M7.5 5.5 V9.5" stroke="#e8e8e8" stroke-width="1"/></svg><svg class="a" style="left:820px;top:57px" width="17" height="18"><rect x="3" y="4" width="11" height="9" fill="none" stroke="#e8e8e8" stroke-width="1"/><path d="M4.5 5.5 L7 8 M12.5 5.5 L10 8 M4.5 11.5 L7 9 M12.5 11.5 L10 9" stroke="#e8e8e8" stroke-width="1.2"/></svg><svg class="a" style="left:840.5px;top:57px" width="17" height="18"><circle cx="7.5" cy="7.5" r="4" fill="none" stroke="#e8e8e8" stroke-width="1.5"/><path d="M10.5 10.5 L14 14" stroke="#e8e8e8" stroke-width="2"/><path d="M5.5 7.5 H9.5" stroke="#e8e8e8" stroke-width="1"/></svg><svg class="a" style="left:866.5px;top:57px" width="17" height="18"><circle cx="8.5" cy="9" r="5" fill="none" stroke="#e8e8e8" stroke-width="1.5"/><path d="M6 7 L10 6.5 L11 10.5 L7 11Z" fill="#e8e8e8"/></svg><svg class="a" style="left:887px;top:57px" width="17" height="18"><path d="M4 5 L13 5 L12 12 L5 12Z" fill="#e8e8e8"/><path d="M3 3.5 L5 5.5 M14 3.5 L12 5.5 M3 13.5 L5 11.5 M14 13.5 L12 11.5" stroke="#e8e8e8" stroke-width="1.3"/></svg><svg class="a" style="left:907px;top:57px" width="17" height="18"><circle cx="8.5" cy="9" r="5" fill="none" stroke="#e8e8e8" stroke-width="1.5"/><path d="M6 7 L10 6.5 L11 10.5 L7 11Z" fill="#e8e8e8"/></svg><svg class="a" style="left:933px;top:57px" width="17" height="18"><rect x="4" y="6.5" width="4" height="7.5" fill="#e8e8e8"/><rect x="9.5" y="6.5" width="4" height="7.5" fill="none" stroke="#e8e8e8" stroke-width="1"/><path d="M5 6 Q8.5 2 12 6" fill="none" stroke="#e8e8e8" stroke-width="1"/></svg><div class="a" style="left:770px;top:76.5px;width:254px;height:88px;background:#4a4646"></div><div class="a" style="left:840.2px;top:77.6px;width:121.3px;height:86px;background:#b02828"></div><svg class="a" style="left:842.7px;top:77.6px" width="116" height="86"><use href="#art" width="116" height="86" style="--k:1.9;--kt:1.15"/></svg><div class="a" style="left:770px;top:167px;width:264px;height:15.6px;background:#3a3737"></div><div class="a" style="left:770px;top:167px;width:264px;height:1px;background:#56646f"></div><span class="t" style="left:878.85px;top:172.50px;font-size:8px;color:#d4d4d4;transform:scaleX(1.0142);">Layer</span><svg class="a" style="left:1009px;top:170px" width="22" height="10"><path d="M1.5 3 V8.5 H7 V5.5 M3.5 3 H5 M5.5 6 L8 1.5 M6 1.5 H8.3 V3.5" fill="none" stroke="#cfcfcf" stroke-width="1"/><path d="M13 2.5 L18 7.5 M18 2.5 L13 7.5" stroke="#e0e0e0" stroke-width="1.8"/></svg><div class="a" style="left:770px;top:182.5px;width:254px;height:62px;background:#262626"></div><span class="t" style="left:774.70px;top:191.25px;font-size:8.5px;color:#d6d6d6;transform:scaleX(0.9782);">Opacity</span><div class="a" style="left:840.5px;top:189px;width:150.5px;height:11.5px;background:linear-gradient(to right,#7cbcf0,#4e9ad8);border:1px solid #3a5a78"></div><span class="t" style="left:996.30px;top:191.25px;font-size:8.5px;color:#e0e0e0;transform:scaleX(0.9789);">100 %</span><span class="t" style="left:774.70px;top:210.25px;font-size:8.5px;color:#d6d6d6;transform:scaleX(0.9216);">Blending</span><div class="a" style="left:840.5px;top:206.5px;width:184px;height:16px;background:#4a4747"></div><span class="t" style="left:842.70px;top:210.25px;font-size:8.5px;color:#d6d6d6;transform:scaleX(0.9268);">Normal</span><svg class="a" style="left:1012px;top:212px" width="8" height="5"><path d="M1 1 H7 L4 4Z" fill="#aaa"/></svg><div class="a" style="left:777px;top:231px;width:8.5px;height:8.5px;border:1px solid #bbb"></div><span class="t" style="left:790.00px;top:231.25px;font-size:8.5px;color:#d6d6d6;transform:scaleX(0.9790);">Protect Alpha</span><div class="a" style="left:862.5px;top:231px;width:8.5px;height:8.5px;border:1px solid #555"></div><span class="t" style="left:875.50px;top:231.25px;font-size:8.5px;color:#7a7a7a;transform:scaleX(0.9115);">Clipping</span><div class="a" style="left:948px;top:231px;width:8.5px;height:8.5px;border:1px solid #bbb"></div><span class="t" style="left:961.00px;top:231.25px;font-size:8.5px;color:#d6d6d6;transform:scaleX(0.8904);">Lock</span><div class="a" style="left:770px;top:244.5px;width:254px;height:90px;background:#262626"></div><div class="a" style="left:773px;top:245px;width:240.5px;height:89px;background:#3a3838"></div><div class="a" style="left:773px;top:245px;width:240.5px;height:28px;background:#5a5858"></div><div class="a" style="left:776.2px;top:253.60000000000002px;width:7.4px;height:7.4px;border-radius:50%;background:radial-gradient(circle at 50% 45%,#f0f0f0,#c8c8c8)"></div><div class="a" style="left:799px;top:248.3px;width:25.5px;height:18px;background:#fff;background-image:linear-gradient(45deg,rgba(205,205,205,.7) 25%,transparent 25%,transparent 75%,rgba(205,205,205,.7) 75%),linear-gradient(45deg,rgba(205,205,205,.7) 25%,transparent 25%,transparent 75%,rgba(205,205,205,.7) 75%);background-size:6px 6px;background-position:0 0,3px 3px"></div><svg class="a" style="left:799px;top:248.3px" width="26" height="18"><path d="M2 2 Q1 5 3 7 Q5 6 4.5 2.5Z" fill="none" stroke="#777" stroke-width="0.6"/><circle cx="19" cy="13" r="0.6" fill="#555"/></svg><span class="t" style="left:837.60px;top:255.15px;font-size:9.3px;color:#f2f2f2;transform:scaleX(1.0057);">Layer3</span><div class="a" style="left:773px;top:274.5px;width:240.5px;height:29px;background:#5a5858"></div><div class="a" style="left:776.2px;top:284.6px;width:7.4px;height:7.4px;border-radius:50%;background:radial-gradient(circle at 50% 45%,#f0f0f0,#c8c8c8)"></div><div class="a" style="left:799px;top:279.8px;width:25.5px;height:18px;background:#fff;background-image:linear-gradient(45deg,rgba(205,205,205,.7) 25%,transparent 25%,transparent 75%,rgba(205,205,205,.7) 75%),linear-gradient(45deg,rgba(205,205,205,.7) 25%,transparent 25%,transparent 75%,rgba(205,205,205,.7) 75%);background-size:6px 6px;background-position:0 0,3px 3px"></div><svg class="a" style="left:799px;top:279.8px" width="26" height="18"><circle cx="12.5" cy="8" r="5.3" fill="#fff" stroke="#b07070" stroke-width="0.7"/><path d="M9 13 L8 18 M16 13 L17 18" stroke="#b07070" stroke-width="0.7"/><circle cx="11.2" cy="7.8" r="0.6" fill="#955"/><circle cx="13.8" cy="7.8" r="0.6" fill="#955"/><path d="M6.5 16 L9 15.5" stroke="#e07070" stroke-width="1"/></svg><span class="t" style="left:837.60px;top:285.15px;font-size:9.3px;color:#f2f2f2;transform:scaleX(1.0057);">Layer2</span><div class="a" style="left:773px;top:304.4px;width:240.5px;height:29.6px;background:#5a5858"></div><div class="a" style="left:787px;top:304.4px;width:226.5px;height:29.6px;background:#4a94d4"></div><div class="a" style="left:776.2px;top:315.3px;width:7.4px;height:7.4px;border-radius:50%;background:radial-gradient(circle at 50% 45%,#f0f0f0,#c8c8c8)"></div><div class="a" style="left:799px;top:310.8px;width:25.5px;height:18px;background:#9ee4d4;background-image:linear-gradient(45deg,rgba(205,205,205,.7) 25%,transparent 25%,transparent 75%,rgba(205,205,205,.7) 75%),linear-gradient(45deg,rgba(205,205,205,.7) 25%,transparent 25%,transparent 75%,rgba(205,205,205,.7) 75%);background-size:6px 6px;background-position:0 0,3px 3px"></div><svg class="a" style="left:799px;top:310.8px" width="26" height="18"><g fill="#f4f4f4" opacity="0.85"><ellipse cx="5" cy="4.5" rx="3.2" ry="3"/><circle cx="12.5" cy="8" r="5.5"/><path d="M9 12 Q7.5 15 7.8 18 H17.5 Q17.5 14 16 12Z"/></g></svg><span class="t" style="left:837.60px;top:315.35px;font-size:9.3px;color:#f2f2f2;font-weight:bold;transform:scaleX(1.1139);">Layer1</span><svg class="a" style="left:997px;top:312.5px" width="13" height="13"><g fill="#fff"><circle cx="6.5" cy="6.5" r="4"/><path d="M6.5 0.5 L7.7 3.5 L5.3 3.5Z M6.5 12.5 L7.7 9.5 L5.3 9.5Z M0.5 6.5 L3.5 5.3 L3.5 7.7Z M12.5 6.5 L9.5 5.3 L9.5 7.7Z M2.3 2.3 L5 3.7 L3.7 5Z M10.7 10.7 L8 9.3 L9.3 8Z M10.7 2.3 L9.3 5 L8 3.7Z M2.3 10.7 L3.7 8 L5 9.3Z"/></g><circle cx="6.5" cy="6.5" r="1.6" fill="#4a94d4"/></svg><div class="a" style="left:1014px;top:245px;width:10px;height:89px;background:#2a2a2a"></div><svg class="a" style="left:1015px;top:246px" width="9" height="6"><path d="M1 5 H8 L4.5 1Z" fill="#bbb"/></svg><div class="a" style="left:1014.5px;top:258px;width:9.5px;height:66.5px;background:#5a5858;border-radius:3px"></div><svg class="a" style="left:1015px;top:327px" width="9" height="6"><path d="M1 1 H8 L4.5 5Z" fill="#bbb"/></svg><div class="a" style="left:770px;top:334px;width:254px;height:25px;background:#262626"></div><div class="btn" style="left:775.5px;top:338.5px;width:17px;height:17px;background:#4a4747;"></div><div class="btn" style="left:796px;top:338.5px;width:17px;height:17px;background:#4a4747;"></div><div class="btn" style="left:816px;top:338.5px;width:17.5px;height:17px;background:#4a4747;"></div><div class="btn" style="left:836.5px;top:338.5px;width:22px;height:17px;background:#4a4747;"></div><div class="btn" style="left:861.5px;top:338.5px;width:18.5px;height:17px;background:#4a4747;"></div><div class="btn" style="left:888px;top:338.5px;width:17px;height:17px;background:#4a4747;"></div><div class="btn" style="left:908.5px;top:338.5px;width:17px;height:17px;background:#1e1e1e;border:1px solid #4a4747;"></div><div class="btn" style="left:934px;top:338.5px;width:17.5px;height:17px;background:#4a4747;"></div><div class="a" style="left:884px;top:342px;width:1px;height:10px;background:#555"></div><div class="a" style="left:930px;top:342px;width:1px;height:10px;background:#555"></div><svg class="a" style="left:775.5px;top:338.5px" width="17" height="17"><path d="M5 3.5 H10.5 L13 6 V13.5 H5Z" fill="none" stroke="#e0e0e0" stroke-width="1"/></svg><svg class="a" style="left:796px;top:338.5px" width="17" height="17"><path d="M5 3.5 H10.5 L13 6 V13.5 H5Z" fill="none" stroke="#e0e0e0" stroke-width="1"/><text x="9" y="12" font-size="6.5" fill="#e0e0e0" text-anchor="middle" font-family="Liberation Sans">8</text></svg><svg class="a" style="left:816px;top:338.5px" width="17.5" height="17"><path d="M5 3.5 H10.5 L13 6 V13.5 H5Z" fill="none" stroke="#e0e0e0" stroke-width="1"/><path d="M9 12 V7 M7.5 8.5 L9 7 L10.5 8.5" stroke="#e0e0e0" stroke-width="0.9" fill="none"/></svg><svg class="a" style="left:836.5px;top:338.5px" width="22" height="17"><path d="M4 3.5 H9 L11 5.5 V13 H4Z" fill="none" stroke="#e0e0e0" stroke-width="1"/><path d="M9.5 11 H13.5 M11.5 9 V13" stroke="#e0e0e0" stroke-width="1.2"/><path d="M15 7.5 H19 L17 10Z" fill="#e0e0e0"/></svg><svg class="a" style="left:861.5px;top:338.5px" width="18.5" height="17"><path d="M3.5 5 H8 L9 6.5 H15 V13.5 H3.5Z" fill="#e0e0e0"/></svg><svg class="a" style="left:888px;top:338.5px" width="17" height="17"><rect x="3.5" y="6" width="7.5" height="7.5" fill="none" stroke="#e0e0e0" stroke-width="1"/><path d="M5.5 6 V4 H13 V11.5 H11" fill="none" stroke="#e0e0e0" stroke-width="1"/></svg><svg class="a" style="left:908.5px;top:338.5px" width="17" height="17"><rect x="3.5" y="4" width="4" height="3" fill="#e0e0e0"/><rect x="3.5" y="10" width="4" height="3" fill="#e0e0e0"/><rect x="10" y="7" width="4" height="3" fill="#e0e0e0"/><path d="M7.5 5.5 L10 8.5 L7.5 11.5" stroke="#e0e0e0" stroke-width="1" fill="none"/></svg><svg class="a" style="left:934px;top:338.5px" width="17.5" height="17"><path d="M4 5 H14 M7 5 V3.5 H11 V5" stroke="#e0e0e0" stroke-width="1" fill="none"/><path d="M5 6 H13 L12.5 14 H5.5Z" fill="none" stroke="#e0e0e0" stroke-width="1"/><path d="M7.5 7.5 V12.5 M9 7.5 V12.5 M10.5 7.5 V12.5" stroke="#e0e0e0" stroke-width="0.8"/></svg><div class="a" style="left:770px;top:359px;width:254px;height:4px;background:#1e1e1e"></div><div class="a" style="left:770px;top:357px;width:254px;height:1px;background:#2c3740"></div><div class="a" style="left:770px;top:364.5px;width:264px;height:15.6px;background:#3a3737"></div><div class="a" style="left:770px;top:364.5px;width:264px;height:1px;background:#56646f"></div><span class="t" style="left:870.70px;top:370.00px;font-size:8px;color:#d4d4d4;transform:scaleX(0.9460);">Brush Size</span><svg class="a" style="left:1009px;top:367.5px" width="22" height="10"><path d="M1.5 3 V8.5 H7 V5.5 M3.5 3 H5 M5.5 6 L8 1.5 M6 1.5 H8.3 V3.5" fill="none" stroke="#cfcfcf" stroke-width="1"/><path d="M13 2.5 L18 7.5 M18 2.5 L13 7.5" stroke="#e0e0e0" stroke-width="1.8"/></svg><div class="a" style="left:770px;top:380px;width:246px;height:149.5px;background:#4a4646"></div><div class="a" style="left:771.2px;top:381.5px;width:29.48px;height:37.5px;background:#575555"></div><div class="a" style="left:785.5400000000001px;top:396.1px;width:0.8px;height:0.8px;border-radius:50%;background:#eee"></div><span class="t" style="left:783.71px;top:411.20px;font-size:8px;color:#eeeeee;">1</span><div class="a" style="left:801.6800000000001px;top:381.5px;width:29.48px;height:37.5px;background:#575555"></div><div class="a" style="left:815.9200000000001px;top:396.0px;width:1px;height:1px;border-radius:50%;background:#eee"></div><span class="t" style="left:810.86px;top:411.20px;font-size:8px;color:#eeeeee;">1.5</span><div class="a" style="left:832.1600000000001px;top:381.5px;width:29.48px;height:37.5px;background:#575555"></div><div class="a" style="left:846.1500000000001px;top:395.75px;width:1.5px;height:1.5px;border-radius:50%;background:#eee"></div><span class="t" style="left:844.67px;top:411.20px;font-size:8px;color:#eeeeee;">2</span><div class="a" style="left:862.6400000000001px;top:381.5px;width:29.48px;height:37.5px;background:#575555"></div><div class="a" style="left:876.3800000000001px;top:395.5px;width:2px;height:2px;border-radius:50%;background:#eee"></div><span class="t" style="left:875.15px;top:411.20px;font-size:8px;color:#eeeeee;">3</span><div class="a" style="left:893.12px;top:381.5px;width:29.48px;height:37.5px;background:#575555"></div><div class="a" style="left:906.36px;top:395.0px;width:3px;height:3px;border-radius:50%;background:#eee"></div><span class="t" style="left:905.63px;top:411.20px;font-size:8px;color:#eeeeee;">4</span><div class="a" style="left:923.6px;top:381.5px;width:29.48px;height:37.5px;background:#575555"></div><div class="a" style="left:936.5400000000001px;top:394.7px;width:3.6px;height:3.6px;border-radius:50%;background:#eee"></div><span class="t" style="left:936.11px;top:411.20px;font-size:8px;color:#eeeeee;">5</span><div class="a" style="left:954.08px;top:381.5px;width:29.48px;height:37.5px;background:#575555"></div><div class="a" style="left:966.32px;top:394.0px;width:5px;height:5px;border-radius:50%;background:#eee"></div><span class="t" style="left:966.59px;top:411.20px;font-size:8px;color:#eeeeee;">7</span><div class="a" style="left:984.5600000000001px;top:381.5px;width:29.48px;height:37.5px;background:#575555"></div><div class="a" style="left:995.8000000000001px;top:393.0px;width:7px;height:7px;border-radius:50%;background:#eee"></div><span class="t" style="left:994.85px;top:411.20px;font-size:8px;color:#eeeeee;">10</span><div class="a" style="left:771.2px;top:420.0px;width:29.48px;height:37.5px;background:#575555"></div><div class="a" style="left:780.94px;top:431.0px;width:10px;height:10px;border-radius:50%;background:#eee"></div><span class="t" style="left:781.49px;top:449.70px;font-size:8px;color:#eeeeee;">12</span><div class="a" style="left:801.6800000000001px;top:420.0px;width:29.48px;height:37.5px;background:#575555"></div><div class="a" style="left:810.6700000000001px;top:430.25px;width:11.5px;height:11.5px;border-radius:50%;background:#eee"></div><span class="t" style="left:811.97px;top:449.70px;font-size:8px;color:#eeeeee;">15</span><div class="a" style="left:832.1600000000001px;top:420.0px;width:29.48px;height:37.5px;background:#575555"></div><div class="a" style="left:839.4000000000001px;top:428.5px;width:15px;height:15px;border-radius:50%;background:#eee"></div><span class="t" style="left:842.45px;top:449.70px;font-size:8px;color:#eeeeee;">20</span><div class="a" style="left:862.6400000000001px;top:420.0px;width:29.48px;height:37.5px;background:#575555"></div><div class="a" style="left:868.3800000000001px;top:427.0px;width:18px;height:18px;border-radius:50%;background:#eee"></div><span class="t" style="left:872.93px;top:449.70px;font-size:8px;color:#eeeeee;">25</span><div class="a" style="left:893.12px;top:420.0px;width:29.48px;height:37.5px;background:#575555"></div><div class="a" style="left:898.86px;top:427.0px;width:18px;height:18px;border-radius:50%;background:#eee"></div><span class="t" style="left:903.41px;top:449.70px;font-size:8px;color:#eeeeee;">30</span><div class="a" style="left:923.6px;top:420.0px;width:29.48px;height:37.5px;background:#575555"></div><div class="a" style="left:929.34px;top:427.0px;width:18px;height:18px;border-radius:50%;background:#eee"></div><span class="t" style="left:933.89px;top:449.70px;font-size:8px;color:#eeeeee;">40</span><div class="a" style="left:954.08px;top:420.0px;width:29.48px;height:37.5px;background:#575555"></div><div class="a" style="left:959.82px;top:427.0px;width:18px;height:18px;border-radius:50%;background:#eee"></div><span class="t" style="left:964.37px;top:449.70px;font-size:8px;color:#eeeeee;">50</span><div class="a" style="left:984.5600000000001px;top:420.0px;width:29.48px;height:37.5px;background:#575555"></div><div class="a" style="left:990.3000000000001px;top:427.0px;width:18px;height:18px;border-radius:50%;background:#eee"></div><span class="t" style="left:994.85px;top:449.70px;font-size:8px;color:#eeeeee;">70</span><div class="a" style="left:771.2px;top:458.5px;width:29.48px;height:37.5px;background:#575555"></div><div class="a" style="left:776.94px;top:465.5px;width:18px;height:18px;border-radius:50%;background:#eee"></div><span class="t" style="left:779.26px;top:488.20px;font-size:8px;color:#eeeeee;">100</span><div class="a" style="left:801.6800000000001px;top:458.5px;width:29.48px;height:37.5px;background:#575555"></div><div class="a" style="left:807.4200000000001px;top:465.5px;width:18px;height:18px;border-radius:50%;background:#eee"></div><span class="t" style="left:809.74px;top:488.20px;font-size:8px;color:#eeeeee;">150</span><div class="a" style="left:832.1600000000001px;top:458.5px;width:29.48px;height:37.5px;background:#575555"></div><div class="a" style="left:837.9000000000001px;top:465.5px;width:18px;height:18px;border-radius:50%;background:#eee"></div><span class="t" style="left:840.22px;top:488.20px;font-size:8px;color:#eeeeee;">200</span><div class="a" style="left:862.6400000000001px;top:458.5px;width:29.48px;height:37.5px;background:#575555"></div><div class="a" style="left:868.3800000000001px;top:465.5px;width:18px;height:18px;border-radius:50%;background:#eee"></div><span class="t" style="left:870.70px;top:488.20px;font-size:8px;color:#eeeeee;">300</span><div class="a" style="left:893.12px;top:458.5px;width:29.48px;height:37.5px;background:#575555"></div><div class="a" style="left:898.86px;top:465.5px;width:18px;height:18px;border-radius:50%;background:#eee"></div><span class="t" style="left:901.18px;top:488.20px;font-size:8px;color:#eeeeee;">400</span><div class="a" style="left:923.6px;top:458.5px;width:29.48px;height:37.5px;background:#575555"></div><div class="a" style="left:929.34px;top:465.5px;width:18px;height:18px;border-radius:50%;background:#eee"></div><span class="t" style="left:931.66px;top:488.20px;font-size:8px;color:#eeeeee;">500</span><div class="a" style="left:954.08px;top:458.5px;width:29.48px;height:37.5px;background:#575555"></div><div class="a" style="left:959.82px;top:465.5px;width:18px;height:18px;border-radius:50%;background:#eee"></div><span class="t" style="left:962.14px;top:488.20px;font-size:8px;color:#eeeeee;">700</span><div class="a" style="left:984.5600000000001px;top:458.5px;width:29.48px;height:37.5px;background:#575555"></div><div class="a" style="left:990.3000000000001px;top:465.5px;width:18px;height:18px;border-radius:50%;background:#eee"></div><span class="t" style="left:990.40px;top:488.20px;font-size:8px;color:#eeeeee;">1000</span><div class="a" style="left:770px;top:497px;width:246px;height:32px;background:#4a4646"></div><span class="t" style="left:809.00px;top:487.00px;font-size:15px;color:rgba(200,200,200,0.45);">Activate Windows</span><span class="t" style="left:809.00px;top:505.25px;font-size:11.5px;color:rgba(200,200,200,0.55);">Go to Settings to activate Windows.</span><div class="a" style="left:1016px;top:380px;width:8px;height:150px;background:#2a2a2a"></div><div class="a" style="left:1016.5px;top:390px;width:7.5px;height:130px;background:#6a6868;border-radius:3px"></div>
</body></html>
